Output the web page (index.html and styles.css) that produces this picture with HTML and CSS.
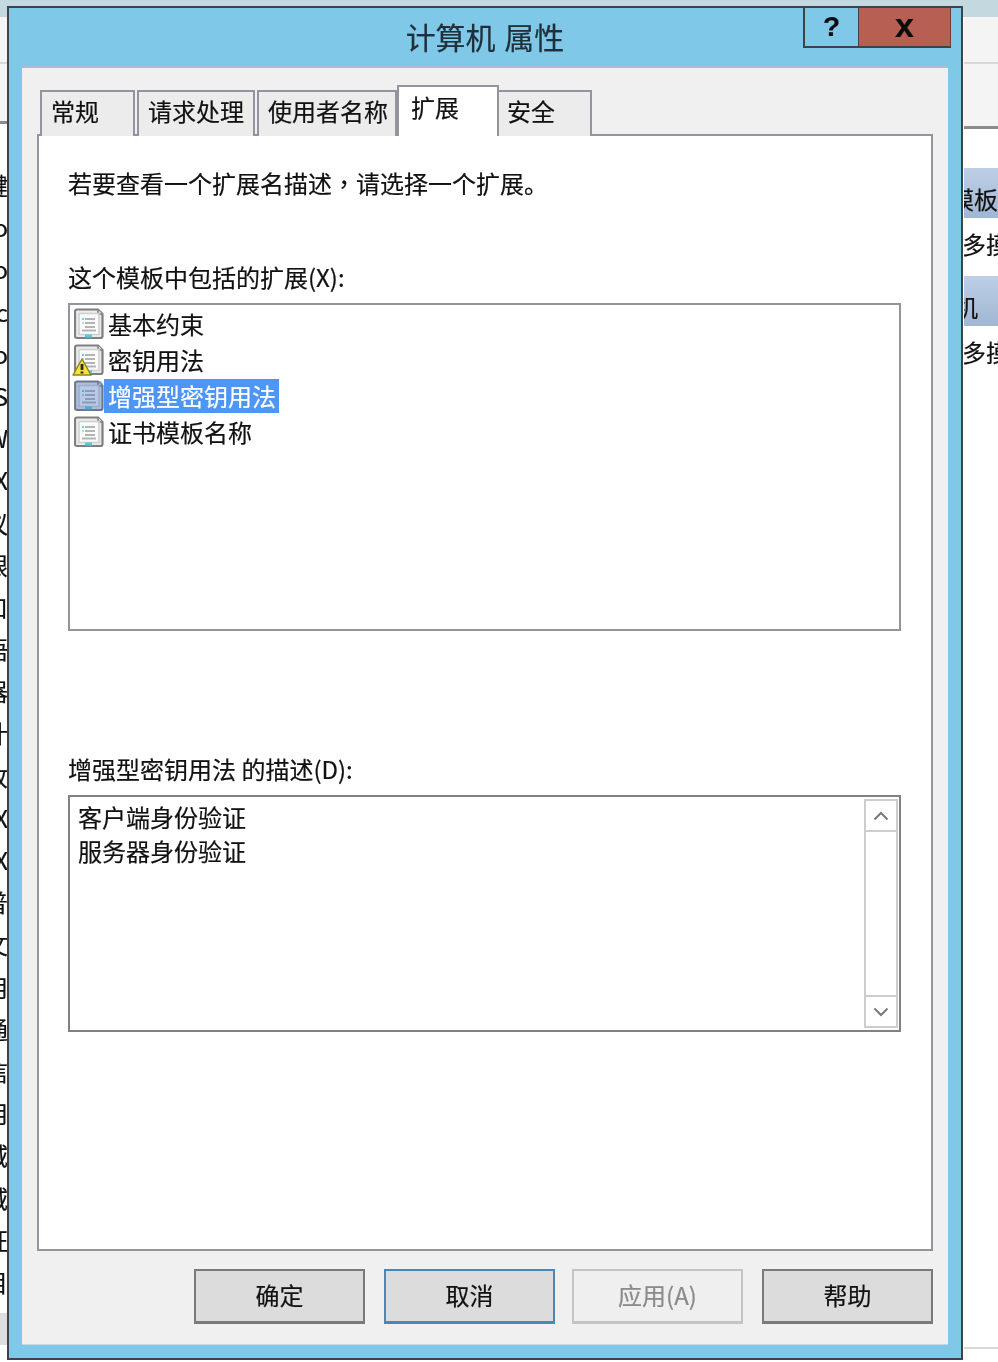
FILE: index.html
```html
<!DOCTYPE html>
<html lang="zh-CN">
<head>
<meta charset="utf-8">
<title>计算机 属性</title>
<link rel="stylesheet" href="styles.css">
</head>
<body>
<svg class="defs" width="0" height="0" aria-hidden="true">
  <symbol id="cert" viewBox="0 0 30 32">
    <path d="M3 1.500h21l4.500 4.500v22a2 2 0 0 1-2 2H3a2 2 0 0 1-2-2V3.500a2 2 0 0 1 2-2z" fill="#ebebeb" stroke="#7f7f7f" stroke-width="2.200"/>
    <path d="M24 1.500v4.500h4.500" fill="#dcdcdc" stroke="#7f7f7f" stroke-width="1.500"/>
    <rect x="5" y="5.500" width="20" height="21" fill="#fbfbfb" stroke="#cfcfcf" stroke-width="1.500"/>
    <path d="M11 11h10M11 15h10M11 19h10M8 22.500h14" stroke="#b4b4b4" stroke-width="1.800"/>
    <rect x="8" y="10" width="2" height="2" fill="#5fd4ea"/>
    <rect x="8" y="14" width="2" height="2" fill="#a0e2ee"/>
    <rect x="11" y="26.500" width="7" height="3" fill="#55c9dd"/>
  </symbol>
</svg>
<main class="desk">
  <header class="back-top"></header>
  <div class="back-left">
    <div class="band"></div>
    <div class="band"></div>
    <div class="chars">
      <span class="ch">键</span><span class="ch">o</span><span class="ch">o</span><span class="ch">c</span><span class="ch">o</span><span class="ch">S</span><span class="ch">W</span><span class="ch">X</span><span class="ch">议</span><span class="ch">眼</span><span class="ch">口</span><span class="ch">语</span><span class="ch">器</span><span class="ch">计</span><span class="ch">收</span><span class="ch">X</span><span class="ch">X</span><span class="ch">普</span><span class="ch">文</span><span class="ch">用</span><span class="ch">通</span><span class="ch">信</span><span class="ch">用</span><span class="ch">域</span><span class="ch">域</span><span class="ch">证</span><span class="ch">目</span>
    </div>
    <div class="foot"></div>
  </div>
  <div class="back-right">
    <div class="band"></div>
    <div class="band rule"></div>
    <div class="head end"><span>模板</span></div>
    <div class="row over"><span>多摸</span></div>
    <div class="head start"><span>机</span></div>
    <div class="row over"><span>多摸</span></div>
    <div class="footline"></div>
  </div>

  <section class="dialog">
    <div class="titlebar">
      <span></span>
      <h1 class="title">计算机 属性</h1>
      <div class="caps">
        <span class="cap help">?</span>
        <span class="cap close">x</span>
      </div>
    </div>
    <div class="client">
      <nav class="tabs">
        <span class="tab t1">常规</span>
        <span class="tab t2">请求处理</span>
        <span class="tab t3">使用者名称</span>
        <span class="tab active">扩展</span>
        <span class="tab t5">安全</span>
      </nav>
      <div class="panel">
        <p class="intro">若要查看一个扩展名描述<span class="mid" lang="zh-TW">，</span>请选择一个扩展。</p>
        <p class="label first">这个模板中包括的扩展(X):</p>
        <ul class="list">
          <li class="item"><svg class="icon"><use href="#cert"/></svg><span class="name">基本约束</span></li>
          <li class="item"><span class="iconwrap"><svg class="icon"><use href="#cert"/></svg><svg class="warn" viewBox="0 0 20 18"><path d="M10 1 19 17H1z" fill="#f5e23a" stroke="#8c8420" stroke-width="1.500" stroke-linejoin="round"/><path d="M10 6v6M10 13.500v2" stroke="#2a2a10" stroke-width="2.800"/></svg></span><span class="name">密钥用法</span></li>
          <li class="item selected"><span class="iconwrap tint"><svg class="icon"><use href="#cert"/></svg></span><span class="name">增强型密钥用法</span></li>
          <li class="item"><svg class="icon"><use href="#cert"/></svg><span class="name">证书模板名称</span></li>
        </ul>
        <p class="label second">增强型密钥用法 的描述(D):</p>
        <div class="descbox">
          <div class="desc">
            <div>客户端身份验证</div>
            <div>服务器身份验证</div>
          </div>
          <div class="scroll">
            <span class="sbtn"><svg class="chev" viewBox="0 0 16 10"><path d="M1.500 8.500 8 2l6.500 6.500" fill="none" stroke="#7a7a7a" stroke-width="2"/></svg></span>
            <span class="strack"></span>
            <span class="sbtn"><svg class="chev" viewBox="0 0 16 10"><path d="M1.500 1.500 8 8l6.500-6.500" fill="none" stroke="#7a7a7a" stroke-width="2"/></svg></span>
          </div>
        </div>
      </div>
      <div class="buttons">
        <button class="btn">确定</button>
        <button class="btn focus">取消</button>
        <button class="btn off">应用(A)</button>
        <button class="btn">帮助</button>
      </div>
    </div>
  </section>
</main>
</body>
</html>
```
FILE: styles.css
```css
* { box-sizing: border-box; }
html, body { margin: 0; padding: 0; background: #fff; }
body {
  font-family: "Noto Sans CJK SC", "Liberation Sans", sans-serif;
  font-size: 24px;
  color: #111;
  -webkit-text-stroke: 0.2px currentColor;
}
.defs { position: absolute; }
.desk {
  position: relative;
  width: 998px;
  height: 1362px;
  overflow: hidden;
  background: #fff;
  filter: blur(0.55px);
}
.back-top { height: 17px; background: #c3d8df; }
.back-left { position: absolute; left: 0; top: 17px; width: 8px; }
.back-right { position: absolute; left: 964px; top: 17px; width: 34px; }
.band { height: 47px; background: #f4f4f4; border-bottom: 2px solid #d8d8d8; }
.back-left .band + .band { height: 60px; border-bottom: 3px solid #8c8c8c; }
.band.rule { height: 65px; border-bottom: 3px solid #8c8c8c; }
.chars { display: flex; flex-direction: column; margin-top: 40px; }
.ch {
  height: 42.2px;
  line-height: 42px;
  display: flex;
  justify-content: flex-end;
  white-space: nowrap;
}
.foot { height: 32px; margin-top: 10px; background: #dedede; }
.head {
  height: 50px;
  line-height: 50px;
  padding-top: 6px;
  display: flex;
  overflow: hidden;
  white-space: nowrap;
  background: linear-gradient(#bdcfe6, #a1b6d3);
}
.head span { flex: none; }
.head.end { margin-top: 39px; justify-content: flex-end; }
.head.start span { margin-left: -10px; }
.row {
  height: 58px;
  line-height: 52px;
  overflow: hidden;
  white-space: nowrap;
  background: #fff;
}
.over span { margin-left: -2px; }
.footline { height: 2px; margin-top: 963px; background: #d8d8d8; }

.dialog {
  position: absolute;
  left: 7px;
  top: 6px;
  width: 956px;
  height: 1354px;
  display: flex;
  flex-direction: column;
  background: #80c8e8;
  border: 2px solid #3c434a;
}
.titlebar {
  height: 58px;
  display: grid;
  grid-template-columns: 1fr auto 1fr;
  align-items: start;
  padding: 0 10px;
}
.title {
  margin: 7px 0 0;
  font-size: 30px;
  font-weight: 400;
  word-spacing: 2px;
  line-height: 42px;
  color: #20303a;
}
.caps { display: flex; justify-self: end; grid-column: 3; }
.cap {
  height: 40px;
  display: flex;
  align-items: center;
  justify-content: center;
  font-family: "Liberation Sans", sans-serif;
  font-weight: 700;
  color: #0c0c0c;
  border-bottom: 2px solid #3c434a;
}
.help { width: 56px; font-size: 28px; border-left: 2px solid #3c434a; border-right: 1px solid #3c434a; }
.close { width: 92px; font-size: 34px; background: #b85f53; padding-bottom: 4px; border-right: 1px solid #6f3f3a; }

.client {
  flex: 1;
  margin: 0 13px 13px;
  background: #f0f0f0;
  border-top: 2px solid #a9bdca;
  border-bottom: 1px solid #c5d7e2;
  padding: 17px 15px 0;
  display: flex;
  flex-direction: column;
}
.tabs {
  height: 51px;
  display: flex;
  align-items: flex-end;
  position: relative;
  z-index: 2;
  padding-left: 3px;
}
.tab {
  height: 46px;
  background: #ececec;
  border: 2px solid #94949e;
  border-bottom: 0;
  font-size: 24px;
  line-height: 38px;
  white-space: nowrap;
  margin-right: 2px;
}
.t1 { width: 95px; padding-left: 9px; }
.t2 { width: 118px; padding-left: 9px; }
.t3 { width: 140px; padding-left: 9px; margin-right: 0; }
.active {
  width: 102px;
  height: 51px;
  background: #fff;
  padding: 0 0 0 12px;
  margin-right: 0;
  line-height: 40px;
}
.t5 { width: 93px; padding-left: 8px; margin-right: 0; border-left: 0; }

.panel {
  height: 1117px;
  margin-top: -2px;
  background: #fff;
  border: 2px solid #94949e;
  padding: 30px 30px 0 29px;
}
.intro, .label { margin: 0; line-height: 34px; }
.mid { font-family: "Noto Sans CJK TC", sans-serif; }
.label.first { margin-top: 60px; }
.label.second { margin-top: 121px; }
.list {
  list-style: none;
  margin: 9px 0 0;
  padding: 1px 0 0 4px;
  height: 328px;
  border: 2px solid #94949e;
}
.item { height: 36px; display: flex; align-items: center; }
.icon { display: block; width: 30px; height: 32px; }
.iconwrap { position: relative; display: block; width: 30px; height: 32px; }
.warn { position: absolute; left: -2px; top: 14px; width: 20px; height: 18px; }
.tint::after {
  content: "";
  position: absolute;
  inset: 1px;
  border-radius: 3px;
  background: rgba(60, 110, 190, 0.35);
}
.name { line-height: 34px; padding: 0 3px 0 4px; }
.selected .name { background: #4d96f5; color: #fff; }

.descbox {
  display: flex;
  margin-top: 9px;
  height: 237px;
  border: 2px solid #808088;
  padding: 2px 1px 2px 0;
}
.desc { flex: 1; padding: 1px 0 0 8px; line-height: 34px; }
.scroll {
  width: 34px;
  display: flex;
  flex-direction: column;
  border: 2px solid #cdcdcd;
}
.sbtn {
  height: 31px;
  display: flex;
  align-items: center;
  justify-content: center;
}
.sbtn:first-child { border-bottom: 2px solid #cdcdcd; }
.sbtn:last-child { border-top: 2px solid #cdcdcd; }
.strack { flex: 1; }
.chev { width: 16px; height: 10px; display: block; }

.buttons {
  display: flex;
  justify-content: flex-end;
  margin: 18px 0 0;
}
.btn {
  width: 171px;
  height: 55px;
  font: inherit;
  color: #111;
  background: #dcdcdc;
  border: 2px solid #7a7a7a;
  border-bottom-width: 3px;
  padding: 0 0 4px;
  margin-left: 19px;
}
.focus { border-color: #4f86b8; }
.off { background: #efefef; border-color: #c4c4c4; color: #8b8b8b; margin-left: 17px; }
```
